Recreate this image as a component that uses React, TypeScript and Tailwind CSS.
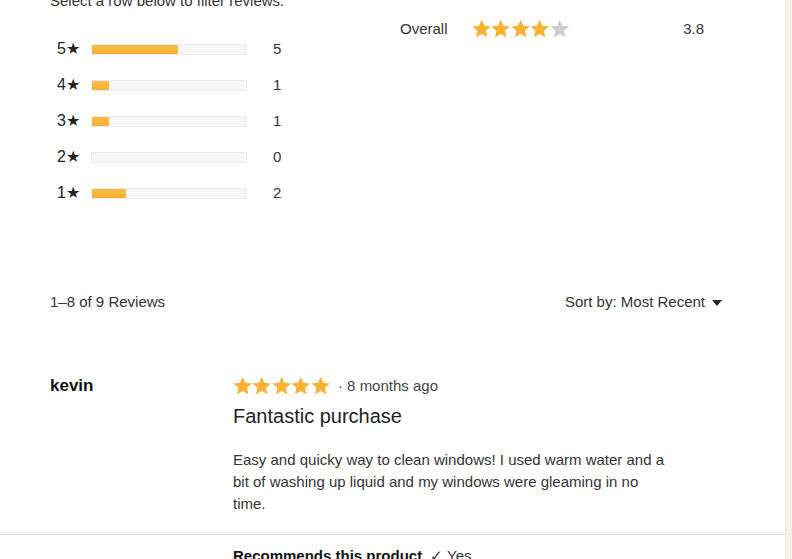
import React from "react";

const STAR = "M10 0.5L12.7 6.78L19.51 7.41L14.37 11.92L15.88 18.59L10 15.1L4.12 18.59L5.63 11.92L0.49 7.41L7.3 6.78Z";

function Star({ color, size = 19 }: { color: string; size?: number }) {
  return (
    <svg width={size} height={size} viewBox="0 0 20 19.5" className="block">
      <path d={STAR} fill={color} />
    </svg>
  );
}

function Stars({ filled, size = 19 }: { filled: number; size?: number }) {
  return (
    <div className="flex items-center">
      {[0, 1, 2, 3, 4].map((i) => (
        <Star key={i} size={size} color={i < filled ? "#f9b233" : "#cfcfcf"} />
      ))}
    </div>
  );
}

const rows = [
  { n: 5, c: 5 },
  { n: 4, c: 1 },
  { n: 3, c: 1 },
  { n: 2, c: 0 },
  { n: 1, c: 2 },
];

export default function App() {
  return (
    <div
      className="flex w-[792px] h-[559px] overflow-hidden bg-white text-[#333]"
      style={{ fontFamily: '"Liberation Sans", Arial, sans-serif' }}
    >
      <div className="flex-1 flex flex-col">
        {/* top histogram + overall */}
        <div className="flex pl-[50px]">
          <div className="w-[350px]">
            <p className="-mt-[8px] text-[15px] leading-[18px] text-[#333]">
              Select a row below to filter reviews.
            </p>
            <div className="mt-[21px] ml-[7px] flex flex-col">
              {rows.map((r) => (
                <div key={r.n} className="flex items-center h-[36px]">
                  <span className="w-[34px] text-[16px] text-[#222]">{r.n}★</span>
                  <div className="w-[156px] h-[11px] bg-[#f6f6f6] border border-[#ececec] rounded-[1px] overflow-hidden">
                    <div
                      className="h-full bg-gradient-to-b from-[#ffbd45] to-[#f8b030]"
                      style={{ width: `${(r.c / 9) * 100}%` }}
                    />
                  </div>
                  <span className="ml-[26px] text-[15px] text-[#333]">{r.c}</span>
                </div>
              ))}
            </div>
          </div>
          <div className="pt-[20px] w-[304px] flex items-center h-[38px]">
            <span className="w-[72px] text-[15px] text-[#333]">Overall</span>
            <Stars filled={4} size={19.4} />
            <span className="ml-auto text-[15px] text-[#333]">3.8</span>
          </div>
        </div>

        {/* count + sort */}
        <div className="mt-[81px] flex items-center justify-between pl-[50px] pr-[63px] h-[20px]">
          <span className="text-[15px]">1–8 of 9 Reviews</span>
          <div className="flex items-center text-[15px]">
            <span>Sort by: Most Recent</span>
            <svg width="10" height="6" viewBox="0 0 10 6" className="ml-[7px] mt-[2px]">
              <path d="M0 0h10L5 6z" fill="#222" />
            </svg>
          </div>
        </div>

        {/* review */}
        <div className="mt-[63px] flex pl-[50px]">
          <div className="w-[183px] text-[17px] font-bold text-[#111] leading-[20px] pt-[1px]">kevin</div>
          <div className="flex flex-col">
            <div className="flex items-center h-[20px] mt-[1px]">
              <Stars filled={5} size={19.4} />
              <span className="ml-[8px] text-[15px] text-[#444]">· 8 months ago</span>
            </div>
            <div className="mt-[8px] text-[20px] leading-[24px] text-[#222]">Fantastic purchase</div>
            <p className="mt-[21px] w-[440px] text-[15px] leading-[22px] text-[#333]">
              Easy and quicky way to clean windows! I used warm water and a bit of washing up liquid and my windows were gleaming in no time.
            </p>
          </div>
        </div>
        <div className="mt-[19px] border-t border-[#dcdcdc]" />
        <div className="pl-[233px] mt-[13px] text-[15px] leading-[16px]">
          <span className="font-bold text-[#111]">Recommends this product</span>
          <span className="ml-[8px] text-[#333]">✓ Yes</span>
        </div>
      </div>
      <div className="w-[7px] bg-[#f6f2ea] border-l border-[#efe9df]" />
    </div>
  );
}
